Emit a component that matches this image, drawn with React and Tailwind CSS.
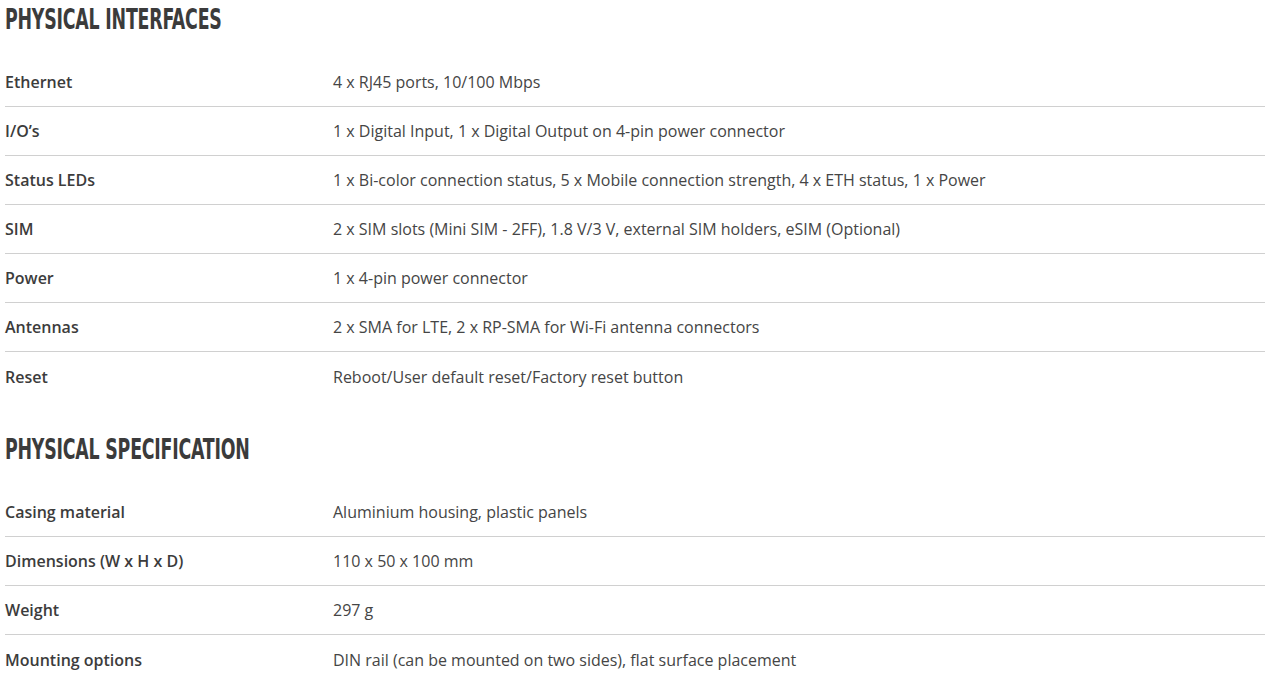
import React from "react";

const sections = [
  {
    title: "PHYSICAL INTERFACES",
    rows: [
      ["Ethernet", "4 x RJ45 ports, 10/100 Mbps"],
      ["I/O’s", "1 x Digital Input, 1 x Digital Output on 4-pin power connector"],
      ["Status LEDs", "1 x Bi-color connection status, 5 x Mobile connection strength, 4 x ETH status, 1 x Power"],
      ["SIM", "2 x SIM slots (Mini SIM - 2FF), 1.8 V/3 V, external SIM holders, eSIM (Optional)"],
      ["Power", "1 x 4-pin power connector"],
      ["Antennas", "2 x SMA for LTE, 2 x RP-SMA for Wi-Fi antenna connectors"],
      ["Reset", "Reboot/User default reset/Factory reset button"],
    ],
  },
  {
    title: "PHYSICAL SPECIFICATION",
    rows: [
      ["Casing material", "Aluminium housing, plastic panels"],
      ["Dimensions (W x H x D)", "110 x 50 x 100 mm"],
      ["Weight", "297 g"],
      ["Mounting options", "DIN rail (can be mounted on two sides), flat surface placement"],
    ],
  },
];

export default function App() {
  return (
    <div className="w-[1278px] h-[693px] overflow-hidden bg-white pl-[5px] pr-[13px]" style={{ fontFamily: "'Open Sans', sans-serif" }}>
      {sections.map((s, i) => (
        <div key={s.title} className={i > 0 ? "mt-[29px]" : ""}>
          <h2 className="h-[58px] pt-[5px] text-[28px] leading-[30px] font-bold text-[#3b3b3b] tracking-[-0.3px] origin-left scale-x-[0.69]" style={{ fontFamily: "'Liberation Sans Narrow', 'DejaVu Sans Condensed', sans-serif" }}>
            {s.title}
          </h2>
          <div>
            {s.rows.map(([k, v], j) => (
              <div key={k} className={"flex h-[49px] items-center text-[16px] " + (j < s.rows.length - 1 ? "border-b border-[#d0d0d0]" : "")}>
                <div className="w-[328px] shrink-0 font-semibold text-[#3c3c3c]">{k}</div>
                <div className="text-[#454545]">{v}</div>
              </div>
            ))}
          </div>
        </div>
      ))}
    </div>
  );
}
